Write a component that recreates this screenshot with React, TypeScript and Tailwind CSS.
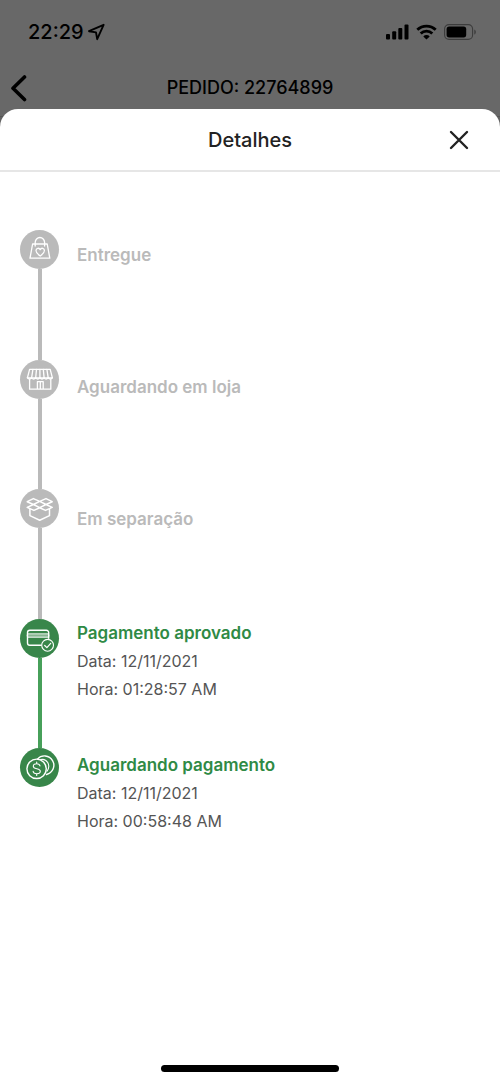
import type { ReactNode } from "react";

type Step = {
  title: string;
  icon: ReactNode;
  done: boolean;
  date?: string;
  time?: string;
};

const iconProps = {
  viewBox: "0 0 39 39",
  fill: "none",
  stroke: "white",
  strokeLinecap: "round" as const,
  strokeLinejoin: "round" as const,
  className: "size-full",
  "aria-hidden": true,
};

function BagIcon() {
  return (
    <svg {...iconProps} strokeWidth="1.3">
      <path d="M12.6 14h14.6l2.6 14.2H10z" />
      <path d="M15.2 16V12.4a4.7 4.9 0 0 1 9.4 0V16" />
      <path d="M20.2 26c-2.6-1.7-4.2-3.3-4.2-5.4 0-2.7 3.2-3.1 4.2-1 1-2.1 4.2-1.7 4.2 1 0 2.1-1.6 3.7-4.2 5.4z" />
    </svg>
  );
}

function StoreIcon() {
  return (
    <svg {...iconProps} strokeWidth="1.3">
      <path d="M9.6 9.4h20.6l2.2 8.4H7.4z" />
      <path d="M12.9 9.4l-1.3 8.4M16.5 9.4l-.8 8.4M19.9 9.4v8.4M23.3 9.4l.8 8.4M26.9 9.4l1.3 8.4" />
      <path d="M7.4 17.8q2.1 2.4 4.2 0 2 2.4 4.1 0 2.1 2.4 4.2 0 2.1 2.4 4.2 0 2 2.4 4.1 0 2.1 2.4 4.2 0" />
      <path d="M9.6 19.4v9.8h21.2v-9.8M17.4 29.2v-7.6h5.8v7.6M20.3 22v7.2" />
    </svg>
  );
}

function BoxIcon() {
  return (
    <svg {...iconProps} strokeWidth="1.5">
      <path d="M13.4 9.6l6.3 2.8-6.3 3.1-6.2-2.8zM26 9.6l-6.3 2.8 6.3 3.1 6.2-2.8zM13.4 15.5l6.3 3.2-5.8 2.7-6.7-3zM26 15.5l-6.3 3.2 5.8 2.7 6.7-3z" />
      <path d="M9.9 20.2v6.4l9.8 4.6 9.8-4.6v-6.4" />
    </svg>
  );
}

function CardIcon() {
  return (
    <svg {...iconProps} strokeWidth="1.4">
      <path d="M21 26.2H9.8a2.3 2.3 0 0 1-2.3-2.3V13.6a2.3 2.3 0 0 1 2.3-2.3h16.6a2.3 2.3 0 0 1 2.3 2.3v5.6" />
      <path d="M7.7 14.9h20.8M7.7 18.2h20.8" strokeWidth="1" />
      <path d="M7.7 16.6h20.8" strokeWidth="2.6" opacity=".4" />
      <circle cx="27.6" cy="26.3" r="5.9" strokeWidth="1.1" />
      <path d="M24.7 26.5l2.2 2.1 3.8-4.3" strokeWidth="1.2" />
    </svg>
  );
}

function CoinsIcon() {
  return (
    <svg {...iconProps} strokeWidth="1.4">
      <circle cx="16.6" cy="20.8" r="9.7" />
      <path d="M17.4 11.1a9.4 9.4 0 1 1 9.1 15.4" />
      <path d="M20.6 11.6c6-1.6 10.8 5.6 6.4 11.6" strokeWidth="1.1" />
      <path d="M20 17.9c-.3-1.4-1.6-2.1-3.3-2.1-1.9 0-3.4.8-3.4 2.4 0 3.6 7 1.5 7 5.1 0 1.6-1.6 2.4-3.5 2.4-2 0-3.5-.8-3.7-2.4M16.7 14.1v1.7M16.7 25.7v1.7" strokeWidth="1.1" />
    </svg>
  );
}

const steps: Step[] = [
  { title: "Entregue", icon: <BagIcon />, done: false },
  { title: "Aguardando em loja", icon: <StoreIcon />, done: false },
  { title: "Em separação", icon: <BoxIcon />, done: false },
  { title: "Pagamento aprovado", icon: <CardIcon />, done: true, date: "12/11/2021", time: "01:28:57 AM" },
  { title: "Aguardando pagamento", icon: <CoinsIcon />, done: true, date: "12/11/2021", time: "00:58:48 AM" },
];

function StatusBar() {
  return (
    <div className="flex h-16 items-center justify-between pr-6 pl-7">
      <div className="flex items-center gap-1">
        <span className="text-xl font-medium">22:29</span>
        <svg viewBox="0 0 18 18" className="size-[18px]" fill="none" stroke="currentColor" strokeWidth="1.9" strokeLinejoin="round" aria-hidden="true">
          <path d="M15.6 1.8L1 8.2l7 1.2 1.2 6.8z" />
        </svg>
      </div>
      <div className="flex items-center gap-[7px]">
        <svg viewBox="0 0 23 16" className="h-4 w-[23px]" fill="currentColor" aria-hidden="true">
          <rect x="0" y="10" width="4" height="5.5" rx="1" />
          <rect x="6.2" y="7.3" width="4" height="8.2" rx="1" />
          <rect x="12.3" y="4" width="4" height="11.5" rx="1" />
          <rect x="18.5" y=".5" width="4" height="15" rx="1" />
        </svg>
        <svg viewBox="0 0 21 16" className="h-4 w-[21px]" fill="none" stroke="currentColor" strokeWidth="2.8" aria-hidden="true">
          <path d="M1.3 5.8a13.2 13.2 0 0 1 18.4 0" />
          <path d="M4.7 9.5a8.3 8.3 0 0 1 11.6 0" />
          <path d="M10.5 15.6L7.3 12.4a4.6 4.6 0 0 1 6.4 0z" fill="currentColor" stroke="none" />
        </svg>
        <svg viewBox="0 0 32 16" className="h-4 w-8" fill="none" aria-hidden="true">
          <rect x=".6" y=".6" width="28" height="14.8" rx="4.4" stroke="#3c3c3c" strokeWidth="1.1" />
          <rect x="2.6" y="2.6" width="19.6" height="10.8" rx="2.6" fill="currentColor" />
          <path d="M30.3 5.4c2 1 2 4.2 0 5.2z" fill="#3c3c3c" />
        </svg>
      </div>
    </div>
  );
}

export default function App() {
  return (
    <div className="flex min-h-screen flex-col bg-[#626262] font-['Inter',sans-serif] text-black">
      <header className="border-b border-[#565656] bg-[#686868] pb-1">
        <StatusBar />
        <div className="grid h-12 grid-cols-[48px_1fr_48px] items-center">
          <button type="button" aria-label="Voltar" className="flex h-12 items-center pl-2">
            <svg viewBox="0 0 20 28" className="h-7 w-5" fill="none" stroke="currentColor" strokeWidth="3.6" strokeLinecap="round" strokeLinejoin="round" aria-hidden="true">
              <path d="M16.5 3L5 14.3l11.5 11.2" />
            </svg>
          </button>
          <h1 className="text-center text-lg font-medium">PEDIDO: 22764899</h1>
        </div>
      </header>

      <main className="-mt-2 flex grow flex-col rounded-t-[18px] bg-white">
        <div className="grid h-[63px] grid-cols-[64px_1fr_64px] items-center border-b-2 border-[#e6e6e6] text-[#222]">
          <h2 className="col-start-2 text-center text-xl font-medium">Detalhes</h2>
          <button type="button" aria-label="Fechar" className="flex h-12 items-center pl-3">
            <svg viewBox="0 0 22 22" className="size-[22px]" fill="none" stroke="currentColor" strokeWidth="2.4" strokeLinecap="round" aria-hidden="true">
              <path d="M3 3l16 16M19 3L3 19" />
            </svg>
          </button>
        </div>

        <section className="flex gap-[18px] px-5 pt-[49px]" aria-label="Andamento do pedido">
          <div className="flex w-[39px] flex-col items-center pt-[9px] pb-[94px]">
            {steps.map((step, i) => (
              <div key={step.title} className={i === 0 ? "flex flex-col items-center" : "flex grow flex-col items-center"}>
                {i > 0 && <div className={steps[i - 1].done ? "w-1 grow bg-[#47a05a]" : "w-1 grow bg-[#bababa]"} />}
                <div className={step.done ? "size-[39px] rounded-full bg-[#38864a]" : "size-[39px] rounded-full bg-[#bababa]"}>
                  {step.icon}
                </div>
              </div>
            ))}
          </div>

          <ol className="grow">
            {steps.map((step) => (
              <li key={step.title} className={step.done ? "h-[132px] pt-[2px] text-base leading-7 text-[#555]" : "h-[132px] pt-5 leading-7"}>
                <h3 className={step.done ? "text-[17px] leading-7 font-semibold text-[#2f8a45]" : "text-[17px] leading-7 font-semibold text-[#bababa]"}>
                  {step.title}
                </h3>
                {step.date && <p>Data: {step.date}</p>}
                {step.time && <p>Hora: {step.time}</p>}
              </li>
            ))}
          </ol>
        </section>

        <div className="mt-auto flex justify-center pb-[10px]">
          <div className="h-[7px] w-[178px] rounded-full bg-black" />
        </div>
      </main>
    </div>
  );
}
